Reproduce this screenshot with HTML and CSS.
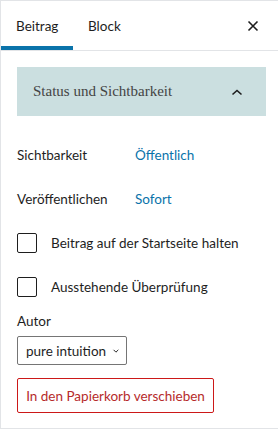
FILE: index.html
```html
<!DOCTYPE html>
<html lang="de">
<head>
  <meta charset="UTF-8" />
  <title>Beitrag - Einstellungen</title>
  <link rel="stylesheet" href="styles.css">
</head>
<body>
  <div class="sidebar">
    <div class="tabs">
      <button class="tab active">Beitrag</button>
      <button class="tab">Block</button>
      <button class="close" aria-label="Schließen">
        <svg width="12" height="12" viewBox="0 0 12 12"><path d="M1.5 1.5l9 9M10.5 1.5l-9 9" stroke="#1e1e1e" stroke-width="1.6"/></svg>
      </button>
    </div>

    <div class="panel-head">
      <span>Status und Sichtbarkeit</span>
      <svg width="12" height="8" viewBox="0 0 12 8"><path d="M1.5 6.5L6 2.5l4.5 4" fill="none" stroke="#1e1e1e" stroke-width="1.6"/></svg>
    </div>

    <div class="panel-body">
      <div class="row">
        <span class="label">Sichtbarkeit</span>
        <a class="value" href="#">Öffentlich</a>
      </div>
      <div class="row">
        <span class="label">Veröffentlichen</span>
        <a class="value" href="#">Sofort</a>
      </div>
      <label class="row check">
        <span class="box"></span>
        Beitrag auf der Startseite halten
      </label>
      <label class="row check">
        <span class="box"></span>
        Ausstehende Überprüfung
      </label>

      <div class="author">
        <span class="author-label">Autor</span>
        <div class="select">
          pure intuition
          <svg width="10" height="10" viewBox="0 0 10 10"><path d="M2 3.5L5 6.5l3-3" fill="none" stroke="#1e1e1e" stroke-width="1.2"/></svg>
        </div>
      </div>

      <button class="trash">In den Papierkorb verschieben</button>
    </div>
  </div>
</body>
</html>
```

FILE: styles.css
```css
* { margin: 0; padding: 0; box-sizing: border-box; }

body {
  font-family: Lato, 'Noto Sans', sans-serif;
  font-size: 13.5px;
  color: #1e1e1e;
  background: #fff;
}

.sidebar {
  width: 278px;
  height: 429px;
  border-top: 1px solid #e2e4e7;
  border-left: 1px solid #e2e4e7;
  border-bottom: 1px solid #e2e4e7;
  padding-right: 12px;
}

.tabs {
  display: flex;
  align-items: center;
  height: 50px;
  border-bottom: 1px solid #e2e4e7;
  margin-right: -12px;
}

.tab {
  height: 49px;
  padding: 0 15px;
  border: none;
  background: none;
  font: inherit;
  color: #1e1e1e;
}

.tab.active {
  width: 72px;
  box-shadow: inset 0 -4px 0 #0a73aa;
}

.close {
  margin-left: auto;
  margin-right: 19px;
  border: none;
  background: none;
  display: flex;
}

.panel-head {
  display: flex;
  align-items: center;
  justify-content: space-between;
  height: 49px;
  margin: 16px 0 0 16px;
  padding: 0 23px 0 16px;
  background: #cbdfe0;
  font-family: 'Liberation Serif', 'DejaVu Serif', serif;
  font-size: 15px;
  color: #444;
}

.panel-body {
  padding: 17px 0 0 16px;
}

.row {
  display: flex;
  align-items: center;
  height: 44px;
}

.label {
  width: 118px;
}

.value {
  color: #0a73aa;
  text-decoration: none;
}

.check {
  gap: 14px;
}

.box {
  width: 20px;
  height: 20px;
  border: 1px solid #1e1e1e;
  border-radius: 2px;
}

.author {
  display: flex;
  flex-direction: column;
  align-items: flex-start;
  gap: 6px;
  padding-top: 3px;
}

.author-label {
  line-height: 18px;
}

.select {
  display: flex;
  align-items: center;
  gap: 6px;
  height: 29px;
  width: 110px;
  padding: 0 6px 0 8px;
  white-space: nowrap;
  border: 1px solid #757575;
  border-radius: 2px;
}

.trash {
  margin-top: 13px;
  height: 35px;
  width: 197px;
  border: 1px solid #cc1818;
  border-radius: 2px;
  background: #fff;
  color: #b62b2b;
  font: inherit;
}
```
